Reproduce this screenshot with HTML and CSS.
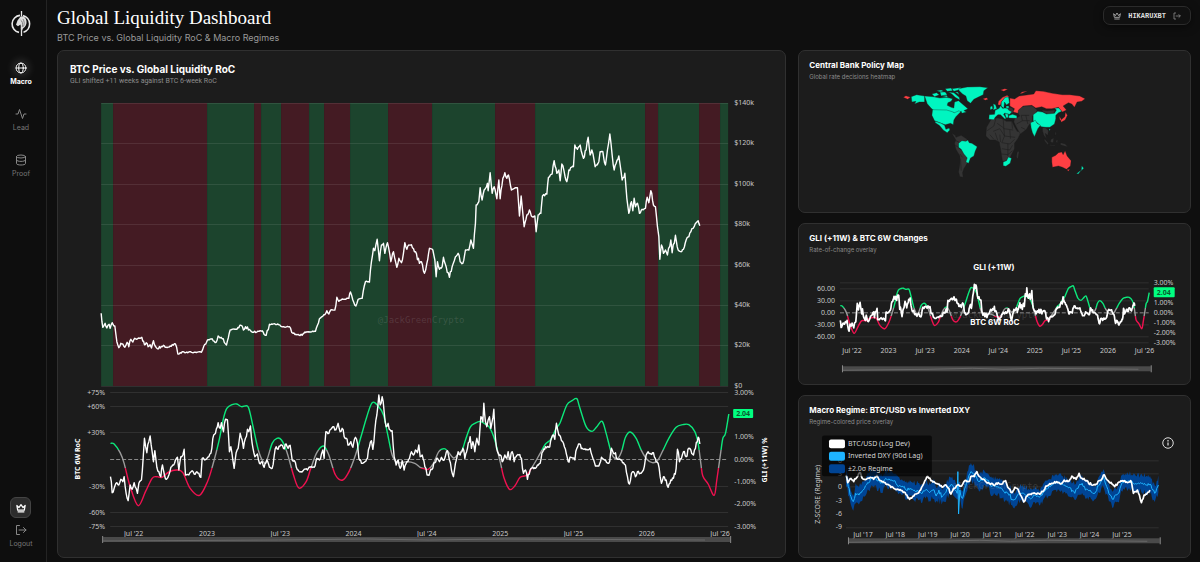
FILE: index.html
```html
<!DOCTYPE html>
<html lang="en">
<head>
    <meta charset="UTF-8">
    <meta name="viewport" content="width=device-width, initial-scale=1">
    <title>Global Liquidity Dashboard</title>
    <link rel="stylesheet" href="styles.css">
</head>
<body>
<div class="app">
    <nav class="sidebar">
        <a class="logo" href="#" aria-label="Home">
            <svg width="20" height="26" viewBox="0 0 20 26" fill="none" stroke="#e8e8e8">
                <path d="M9 4.400A8.600 8.600 0 0 0 8 21.400M12 4.600A8.600 8.600 0 0 1 12.500 21.200" stroke-width="1.600"/>
                <path d="M10.500 0v5M10.500 17v8" stroke-width="1.300"/>
                <path d="M9.500 5.500c3-.8 5.500 1.500 6 4.500.4 3-.8 5.500-3.500 7.500l-1.500 3c-1.200-3-.4-5-1-7l-2.500 1.800-2-1.500 1.500-4.300z" fill="#dedede" stroke="none"/>
                <path d="M9.500 9c2 1 2.500 4 1.800 7M12 8c1.500 2.500 1.500 5 .5 7.500" stroke="#4a4a4a" stroke-width=".6"/>
            </svg>
        </a>
        <a class="nav-item active" href="#">
            <svg class="icon" viewBox="0 0 24 24"><circle cx="12" cy="12" r="10"/><ellipse cx="12" cy="12" rx="4.500" ry="10"/><path d="M2 12h20"/></svg>
            Macro
        </a>
        <a class="nav-item" href="#">
            <svg class="icon" viewBox="0 0 24 24"><path d="M2 12h4l3-9 6 18 3-9h4"/></svg>
            Lead
        </a>
        <a class="nav-item" href="#">
            <svg class="icon" viewBox="0 0 24 24"><ellipse cx="12" cy="5" rx="9" ry="3"/><path d="M3 5v14c0 4 18 4 18 0V5M3 12c0 4 18 4 18 0"/></svg>
            Proof
        </a>
        <div class="sidebar-bottom">
            <button type="button" class="crown-btn" aria-label="Membership">
                <svg width="10" height="10" viewBox="0 0 24 24" fill="none" stroke="#fff" stroke-width="3" stroke-linejoin="round"><path d="M2 6l5 5 5-7 5 7 5-5-2 11H4zM4 21h16"/></svg>
            </button>
            <a class="logout" href="#">
                <svg class="icon" viewBox="0 0 24 24"><path d="M9 3H3v18h6M8 12h14M17 7l5 5-5 5"/></svg>
                Logout
            </a>
        </div>
    </nav>

    <main class="main">
        <header class="header">
            <div>
                <h1>Global Liquidity Dashboard</h1>
                <p>BTC Price vs. Global Liquidity RoC &amp; Macro Regimes</p>
            </div>
            <button type="button" class="user">
                <svg width="8" height="8" viewBox="0 0 24 24" fill="none" stroke="#bbb" stroke-width="2.500" stroke-linejoin="round"><path d="M2 5l5 6 5-8 5 8 5-6-2 11H4zM4 21h16"/></svg>
                <span>HIKARUXBT</span>
                <svg width="8" height="8" viewBox="0 0 24 24" fill="none" stroke="#888" stroke-width="2.500"><path d="M9 3H3v18h6M8 12h14M17 7l5 5-5 5"/></svg>
            </button>
        </header>

        <div class="grid">
            <section class="card card-main">
                <h2>BTC Price vs. Global Liquidity RoC</h2>
                <p>GLI shifted +11 weeks against BTC 6-week RoC</p>
                <svg class="chart" id="mainChart" viewBox="70 87 703 466"></svg>
            </section>

            <section class="card">
                <h2>Central Bank Policy Map</h2>
                <p>Global rate decisions heatmap</p>
                <svg class="chart map" viewBox="-213 27 1113 371">
                    <g class="neutral">
                        <path d="M216 178l10 6 2 6 16-6 18 12-4 8-12-2-10 6 0 14 12 8 8 14 8 12-2 12-10 16-4 12 2 14-10-2-4-14 4-24 0-24-12-20-4-18 4-10z"/>
                        <path d="M334 136l18-4 14 2 14 8 16 0 8 16 8 14 12 2-10 20-10 14 0 16-12 24-16 14-8 0-6-38-4-20-12-6-16 0-12-12 2-26z"/>
                        <path d="M404 134l16-8-8-12 6-10 14-8 26 0 14 12-4 12-10 6 0 16-10 10-8 14-18 14-10-16-10-20z"/>
                        <path d="M384 98l14 4 4 8-4 8-12-4z"/>
                        <path d="M486 108l16 2 24-2-4 10-20 2-12-6z"/>
                        <path d="M488 160l10 2 8 8-2 14-8-6 4 16-8-10-4-14z"/>
                        <path d="M494 194l12 14-2 4-10-12zM514 196l8-4-2 14-8-2zM508 212l18 2v2l-18-2zM528 200l6-2-2 10zM542 206l14 4 8 8-10-2-12-4zM526 172l4 8-4 4zM412 234l6-2-4 22-4-4z"/>
                        <path class="borders" d="M348 134l-6 22-20 14M352 148l20 14 2 24M370 134l2 30 28 4M340 172l20-8 14 22 32 4M330 182l12 14M346 176l8 24M360 182l2 22M374 186l-8 20 24 4 14-14M390 168l2 26M366 224l24 4 8-14M384 210v36M364 240l20 2 14-12M396 142l2 22M410 150l18-10 22 0M424 160l12 6M428 140l-4-16 24 0M438 124l6 26M228 200l12 6M226 214l10 6M240 240l8 10M242 254l2 36"/>
                    </g>
                    <g class="cut">
                        <path d="M94 68l16-6 24 4v18l-16 0-14 6 4-8-12 2z"/>
                        <path d="M134 66l26 2 20 4 20-2 18 4-4 8-10 4-2 8 12 6 8 2 2-18 12-4 14 12 14 12-12 6 8 4-14 4-2-6-14 8-8-4-14-4-42 1-12-10-12-14z"/>
                        <path d="M156 60l14-4 8 6-14 6zM180 54l16 0 6 8-18 4zM170 50l14-2 8 4-10 2zM196 44l18-2 4 8-16 2zM216 44l28-4-8 8-14 4zM206 54l16 2 16 14 2 8-14-8-10-10zM226 54l8 0 4 8zM186 66l14-2 4 6z"/>
                        <path d="M236 44l26-5 38-1 24 3-12 9-2 12-16 8-12 6-10 12-10-8-4-14-10-6-10-10z"/>
                        <path d="M158 107l42 1 14 4 10 4 14-6 4 4-14 14-6 10-2 14-8-4-16 4-12-4-20-8-8-16z"/>
                        <path d="M166 142l18 6 10 6 4 12 10-4 2 6-8 8-12-8-8-10-4-4-12-8z"/>
                        <path d="M236 208l10-8 12 2 6-4 4 8 8 2 16 10-6 14-4 14-10 6-6 16-8-4 4-12-10-12-8-14-8-6z"/>
                        <path d="M370 264l10-4 6-11 9 4-4 15-13 9-8-2z"/>
                        <path d="M340 89l7 3 4 12-11 4 2-8zM331 99l6-4 2 9-8 3zM346 109l12-6 4-8 6 8 14-2 5 8 9 4-6 8-10-2-5-2-4 4 8 12-4 2-13-13-8 0-8 8-4 7-15-1 1-14 16-1zM375 118l10 2 0 11-6 0zM386 125l12-4 13 4 0 8-24-1zM364 96l0-12 12-16 10 0 3 18-9 7-6-9-2 19zM379 96l8 0 0 7-9 0z"/>
                        <path d="M460 122l14-10 14 2 12 6 24-2 6-10-6-6 14 0 8 10-10 4-8 8 0 10-4 16-14 10-12 0-14-2-12-12-12-6zM508 164l4 2-4 4z"/>
                        <path d="M452 146l10-4 4-4 6 10 10 6-8 10-10 24-6-12-4-14z"/>
                        <path d="M606 275l6 8-8 8zM605 287l-9 13-6-1z"/>
                    </g>
                    <g class="hike">
                        <path d="M390 72l14 3 14-9 28-4 16-2 6-10 22 2 28 6 30 4 22 0 30 4 16 8-10 8-14 2-8 16-8-10-10-4-16 10 10 12-12 6-12-14-20 4-16 0-14-6-18 4-12-8-26 2-14 12-2 10-14-4 4-10-14-8z"/>
                        <path d="M354 92l2-10 12-12 14-6 6 4-12 2-12 14-2 10zM70 70l8-5 14 5-9 6zM309 74l11-3 5 5-9 3zM362 48l12-4 10 2-12 6zM420 60l6-6 18-4-16 8zM543 138l12-10 2-14 6 10-7 14-12 7zM538 127l7 9-4 4z"/>
                        <path d="M516 250l12-6 8-8 10-2 4 8 6-12 6 16 12 14-2 16-12 10-12-6-12-4-18 4-2-16zM561 287l9-1-4 6z"/>
                    </g>
                </svg>
            </section>

            <section class="card">
                <h2>GLI (+11W) &amp; BTC 6W Changes</h2>
                <p>Rate-of-change overlay</p>
                <svg class="chart" id="rocChart" viewBox="809 257 371 123"></svg>
            </section>

            <section class="card">
                <h2>Macro Regime: BTC/USD vs Inverted DXY</h2>
                <p>Regime-colored price overlay</p>
                <button type="button" class="info" aria-label="About this chart">
                    <svg width="12" height="12" viewBox="0 0 24 24" fill="none" stroke="#ddd" stroke-width="2"><circle cx="12" cy="12" r="10.500"/><path d="M12 11v6M12 6v3" stroke-width="2.500"/></svg>
                </button>
                <svg class="chart" id="regimeChart" viewBox="809 430 371 123"></svg>
            </section>
        </div>
    </main>
</div>
<script src="charts.js"></script>
</body>
</html>
```

FILE: styles.css
```css
* {
    box-sizing: border-box;
}

body {
    margin: 0;
    background: #0f0f0f;
    color: #fff;
    font-family: Inter, "Open Sans", sans-serif;
}

h1, h2, p {
    margin: 0;
}

a {
    color: inherit;
    text-decoration: none;
}

button {
    padding: 0;
    font: inherit;
    color: inherit;
    cursor: pointer;
}

.app {
    display: flex;
    min-height: 100vh;
}

/* sidebar */
.sidebar {
    display: flex;
    flex-direction: column;
    align-items: center;
    flex: none;
    width: 47px;
    padding: 11px 4px 14px 0;
    border-right: 1px solid #242424;
    background: #0e0e0e;
}

.logo {
    height: 26px;
    margin-bottom: 24px;
}

.nav-item, .logout {
    display: flex;
    flex-direction: column;
    align-items: center;
    gap: 4px;
    color: #777;
    font-size: 7px;
    line-height: 8px;
}

.nav-item {
    height: 46px;
}

.icon {
    width: 12px;
    height: 12px;
    fill: none;
    stroke: #888;
    stroke-width: 2;
    stroke-linecap: round;
    stroke-linejoin: round;
}

.active {
    color: #fff;
    font-weight: 700;
}

.active .icon {
    stroke: #fff;
    border-radius: 50%;
    box-shadow: 0 0 8px 2px rgba(255, 255, 255, .14);
}

.nav-item .icon {
    margin-top: 1px;
}

.sidebar-bottom {
    display: flex;
    flex-direction: column;
    align-items: center;
    gap: 6px;
    margin-top: auto;
}

.crown-btn {
    display: flex;
    align-items: center;
    justify-content: center;
    width: 21px;
    height: 21px;
    border: 1px solid #444;
    border-radius: 6px;
    background: #2c2c2c;
}

/* header */
.main {
    display: flex;
    flex: 1;
    flex-direction: column;
    min-width: 0;
    padding: 6px 9px 4px 10px;
}

.header {
    display: flex;
    align-items: flex-start;
    justify-content: space-between;
    margin-bottom: 4px;
}

h1 {
    font: 400 19px/24px "Liberation Serif", serif;
}

.header p {
    color: #999;
    font-size: 9px;
    line-height: 16px;
}

.user {
    display: flex;
    align-items: center;
    gap: 7px;
    height: 19px;
    padding: 0 9px;
    border: 1px solid #2b2b2b;
    border-radius: 7px;
    background: #111;
    box-shadow: 0 2px 8px rgba(0, 0, 0, .5);
    color: #ddd;
    font: 700 7px/8px "Liberation Mono", monospace;
}

/* cards */
.grid {
    display: grid;
    flex: 1;
    grid-template-columns: 13fr 7fr;
    grid-template-rows: repeat(3, 1fr);
    gap: 10px 12px;
}

.card {
    position: relative;
    display: flex;
    flex-direction: column;
    min-width: 0;
    padding: 8px 10px 4px;
    border: 1px solid #303030;
    border-radius: 7px;
    background: #1c1c1c;
}

.card-main {
    grid-row: 1 / 4;
    padding: 12px 12px 4px;
}

.card h2 {
    font-size: 8px;
    line-height: 12px;
}

.card p {
    color: #8c8c8c;
    font-size: 6px;
    line-height: 11px;
}

.card-main h2 {
    font-size: 10px;
}

.card-main p {
    font: 7px/12px Roboto, sans-serif;
}

.info {
    position: absolute;
    top: 41px;
    right: 16px;
    width: 12px;
    height: 12px;
    border: 0;
    background: none;
}

.info svg {
    display: block;
}

/* charts */
.chart {
    display: block;
    flex: 1 1 0;
    width: 100%;
    min-height: 110px;
    font-family: "Noto Sans", "Open Sans", sans-serif;
    font-size: 7px;
}

.tick {
    fill: #c8c8c8;
}

.axis-name {
    fill: #fff;
    font-weight: 700;
}

.chart-name {
    fill: #fff;
    font: 700 8px Inter, sans-serif;
}

.gridline {
    stroke: rgba(255, 255, 255, .09);
}

.zero {
    stroke: #8a8a8a;
    stroke-dasharray: 4 2;
}

.bull {
    fill: #1c442d;
}

.bear {
    fill: #441b23;
}

.watermark {
    fill: rgba(160, 160, 160, .22);
    font: 9px "DejaVu Sans Mono", monospace;
}

.line {
    fill: none;
    stroke: #fff;
    stroke-width: 1.4;
    stroke-linejoin: round;
}

.bold {
    stroke-width: 1.7;
}

.dxy {
    stroke: #1eb4ff;
    stroke-width: 1;
}

.regime {
    fill: #004494;
}

.track {
    fill: #4a4a4a;
}

.trend {
    fill: none;
    stroke: #686868;
}

.handle {
    fill: #8b8b8b;
}

.badge {
    fill: #00ff80;
}

.badge-text {
    fill: #0b5a30;
    font-weight: 700;
}

.legend-box {
    fill: rgba(0, 0, 0, .62);
}

.legend-text {
    fill: #d4d4d4;
}

/* map */
.map path {
    stroke: #1c1c1c;
    stroke-width: 1;
    stroke-linejoin: round;
}

.neutral {
    fill: #343434;
}

.map .borders {
    fill: none;
    stroke: #1f1f1f;
    stroke-width: 2;
}

.cut {
    fill: #00f5c0;
}

.hike {
    fill: #ff3f43;
}
```

FILE: charts.js
```js
var NS = 'http://www.w3.org/2000/svg';

// series are flat x,y lists, three units to one chart unit
var price = [33,670,38,712,45,700,50,714,57,703,60,715,66,698,74,708,80,755,86,773,92,760,98,762,104,772,111,757,116,770,122,748,128,756,134,745,140,748,155,742,163,764,168,758,174,770,180,764,184,774,190,752,195,768,202,776,220,766,228,772,240,768,256,762,263,792,270,788,290,786,310,788,334,787,341,768,352,750,366,746,378,757,384,738,396,746,409,765,420,720,440,718,452,706,460,720,466,710,484,725,500,726,510,722,528,736,538,703,563,702,580,710,598,710,608,730,636,736,650,725,676,724,688,686,704,674,710,662,716,672,722,660,734,660,740,622,746,634,756,627,764,628,776,625,781,606,788,630,797,648,804,628,816,625,826,575,838,576,844,515,850,475,854,482,861,448,868,512,874,465,880,460,884,490,892,458,902,515,910,485,920,532,926,505,934,518,940,490,944,458,950,478,956,465,964,464,976,485,988,520,994,515,1003,550,1010,520,1018,475];
var price2 = [92,476,98,480,104,510,108,560,112,515,118,538,126,530,130,502,138,530,148,562,156,530,166,500,174,490,180,515,188,520,196,480,206,480,212,450,220,475,226,400,228,345,236,335,240,293,246,330,252,300,262,280,264,302,270,248,276,310,282,290,290,326,296,270,300,326,308,265,314,248,320,265,325,255,334,300,352,293,358,378,363,318,372,410,380,375,388,360,396,380,404,378,408,425,414,375,422,370,427,318,440,312,445,262,456,252,462,212,470,250,476,240,480,272,485,222,492,245,500,275,506,240,520,230,524,165,532,178,540,165,550,205,558,180,564,142,570,195,575,180,585,230,596,215,600,185,608,185,616,225,622,180,629,132,636,195,642,240,648,220,656,198,660,225,666,270,674,250,680,325,686,370,694,335,698,362,702,325,706,350,712,340,718,370,726,358,736,355,741,322,746,338,752,302,760,345,766,350,772,410,776,440,779,508,784,465,790,490,796,480,802,495,812,450,816,488,826,436,834,480,842,485,850,478,858,450,866,440,872,425,882,410,894,392,899,407];

var roc = [151,290,156,338,162,325,170,308,176,315,182,298,188,305,192,290,198,340,204,362,210,315,216,328,222,308,228,325,232,340,236,310,244,300,249,235,253,175,260,218,266,185,270,168,276,215,280,245,284,212,290,262,296,275,302,290,307,255,313,285,319,298,326,285,332,262,338,255,346,240,352,232,356,270,362,230,368,225,372,208,376,285,386,285,396,272,402,282,410,275,416,280,422,292,426,235,434,240,446,230,452,220,458,175,466,160,474,128,480,145,484,128,490,155,496,118,502,120,508,215,512,200,518,240,522,265,528,218,534,205,540,160,546,180,550,205,556,175,562,148,566,155,571,138,576,190,584,230,592,222,598,250,606,245,612,262,620,240,628,262,636,265,642,228,648,200,654,208,662,195,670,205,678,192,684,205,690,196,696,240,706,248,714,270,722,275,732,268,742,270,750,262,762,262,770,235,778,240,784,222,788,210,792,235,797,155,806,160,812,148,818,140,824,150,830,142,834,130,840,155,846,145,852,170,858,175,866,195,872,185,878,202,886,172,892,190,896,235,904,250,914,245,922,235,928,200,934,182,938,208,944,150,950,105,956,45,960,75,966,50,972,95,978,140,984,130,990,150,996,152,1002,230,1008,255,1014,240,1020,265,1026,242,1032,270,1040,245,1048,235,1054,215,1060,225,1066,210,1072,218,1076,195];
var roc2 = [0,230,6,225,14,260,24,285,32,268,44,248,52,235,58,245,64,232,72,240,82,212,88,240,94,270,100,290,106,250,114,215,120,225,128,205,134,235,142,205,150,170,154,205,158,185,164,215,170,175,176,195,182,110,188,125,191,70,196,125,200,140,204,120,208,110,212,145,216,125,221,88,226,175,232,215,240,225,246,245,254,225,260,235,264,215,270,240,276,215,282,245,288,230,296,225,304,235,310,280,316,270,322,298,330,270,338,262,346,265,352,255,360,250,368,215,376,200,386,202,394,175,400,165,404,178,409,130,416,165,424,182,430,190,436,208,444,245,452,232,464,240,470,205,478,192,486,205,500,208,510,205,518,235,526,258,536,258,544,232,556,240,566,250,574,205,580,220,586,218,592,238,602,240,610,248,616,255,622,290,628,312,634,280,640,275,646,290,652,275,660,280,670,270,678,225,684,215,692,222,700,218,708,245,714,250,720,290,724,310,730,290,738,300,744,322,752,300,760,295,768,265,772,208,778,245,784,235,790,215,798,230,806,205,812,210,820,225,826,205,834,172,839,192];

var gli = [151,190,162,192,180,218,192,250,210,320,234,377,256,335,276,295,290,290,306,292,326,276,350,270,368,278,390,325,418,346,442,305,458,255,476,185,490,115,500,85,516,74,530,72,544,80,562,78,570,100,582,155,596,215,612,248,622,235,636,190,650,175,664,180,680,215,700,285,716,324,738,305,752,265,770,218,790,198,806,225,826,285,848,300,868,272,886,225,904,165,920,110,936,68,954,78,970,105,982,160,996,225,1012,248,1040,245,1064,250];
var gli2 = [0,262,12,266,24,268,40,250,56,215,72,206,84,215,100,234,112,225,126,210,136,180,150,142,164,130,180,124,194,132,208,142,224,180,240,245,252,295,268,328,284,318,300,292,320,285,340,255,360,220,376,192,392,178,408,145,420,128,440,75,456,62,470,56,478,80,498,140,516,154,530,140,546,124,558,160,576,225,592,235,604,215,616,172,630,156,648,175,664,212,680,238,696,248,712,242,728,212,746,175,768,142,788,134,806,134,824,155,834,190,842,250,848,288,864,312,882,346,890,300,902,215,908,175,916,160,926,102];

var dxy = [153,250,160,280,168,310,175,325,182,300,192,305,205,290,218,268,230,255,240,250,250,262,260,268,272,255,285,260,300,262,310,280,322,278,334,290,345,285,358,290,370,295,382,300,392,290,404,298,414,290,424,308,432,290,440,312,450,300,460,285,472,275,480,290,487,300,489,235,491,362,495,290,503,315,512,280,520,255,528,235,540,250,552,265,565,255,580,260,592,278,604,280,615,285,628,295,640,300,655,320,668,305,680,300,695,305,710,315,722,305,736,310,748,295,760,285,772,275,786,268,798,270,810,275,825,282,840,300,850,285,862,270,872,290,886,290,900,300,914,275,926,250,936,280,946,305,956,318,966,305,976,285,986,268,1000,262,1014,268,1026,272,1040,270,1055,275,1066,272,1074,290,1080,300,1086,285,1091,275];
var dev = [153,245,158,268,168,255,176,265,186,252,194,238,202,255,214,258,226,252,236,258,246,246,256,262,268,268,282,275,296,285,310,288,322,292,336,305,344,318,354,308,368,300,380,282,390,262,398,248,408,262,420,268,432,272,442,282,454,275,462,285,468,302,476,285,488,275,500,278,510,262,522,265,530,248,538,250,546,235,554,250,566,258,580,268,596,275,610,268,620,272,632,262,642,285,652,298,660,282,670,288,680,310,687,326,694,310,706,302,720,300,734,302,744,295,756,278,770,270,786,265,798,272,808,260,820,265,834,250,844,258,853,240,862,255,876,262,890,275,904,272,916,262,926,245,940,262,952,272,960,280,970,268,984,262,998,268,1008,262,1016,300,1028,290,1034,305,1040,328,1048,305,1056,302,1066,290];

var seed = 7;
function rand() {
    seed = (seed * 16807) % 2147483647;
    return seed / 2147483647 - 0.5;
}

function toPoints(list, ox, oy) {
    var out = [];
    for (var i = 0; i < list.length; i += 2) {
        out.push([list[i] / 3 + ox, list[i + 1] / 3 + oy]);
    }
    return out;
}

function noisy(pts, amp) {
    var out = [];
    for (var i = 0; i < pts.length - 1; i++) {
        var a = pts[i], b = pts[i + 1];
        var n = Math.max(1, Math.round(b[0] - a[0]));
        var k = amp * Math.min(1.5, .4 + Math.abs(b[1] - a[1]) / 8);
        for (var j = 0; j < n; j++) {
            var t = j / n;
            out.push([a[0] + (b[0] - a[0]) * t, a[1] + (b[1] - a[1]) * t + (j ? rand() * k : 0)]);
        }
    }
    out.push(pts[pts.length - 1]);
    return out;
}

function straight(pts) {
    return 'M' + pts.map(function (p) {
        return p[0].toFixed(1) + ' ' + p[1].toFixed(1);
    }).join('L');
}

function smooth(pts) {
    var d = 'M' + pts[0].join(' ');
    for (var i = 0; i < pts.length - 1; i++) {
        var p0 = pts[i - 1] || pts[i], p1 = pts[i], p2 = pts[i + 1], p3 = pts[i + 2] || p2;
        d += 'C' + [p1[0] + (p2[0] - p0[0]) / 6, p1[1] + (p2[1] - p0[1]) / 6,
            p2[0] - (p3[0] - p1[0]) / 6, p2[1] - (p3[1] - p1[1]) / 6, p2[0], p2[1]].join(' ');
    }
    return d;
}

function add(parent, tag, attrs, text) {
    var el = document.createElementNS(NS, tag);
    for (var k in attrs) {
        el.setAttribute(k, attrs[k]);
    }
    if (text) {
        el.textContent = text;
    }
    parent.appendChild(el);
    return el;
}

function label(svg, x, y, text, anchor, cls) {
    // y is the middle of the text
    add(svg, 'text', {x: x, y: y + 2.5, 'text-anchor': anchor || 'middle', 'class': cls || 'tick'}, text);
}

function hline(svg, x1, x2, y, cls) {
    add(svg, 'line', {x1: x1, x2: x2, y1: y, y2: y, 'class': cls || 'gridline'});
}

function rect(svg, x, y, w, h, cls, r) {
    add(svg, 'rect', {x: x, y: y, width: w, height: h, rx: r || 0, 'class': cls});
}

function slider(svg, x, y, w) {
    rect(svg, x, y, w, 5, 'track');
    add(svg, 'path', {
        d: 'M' + x + ' ' + (y + 4) + 'l' + w * .28 + ' -1l' + w * .14 + ' -1l' + w * .1 + ' 1l' + w * .12 + ' -1l' + w * .32 + ' 1',
        'class': 'trend'
    });
    rect(svg, x - 1, y - 1, 1, 7, 'handle');
    rect(svg, x + w, y - 1, 1, 7, 'handle');
}

// green above the upper limit, grey around zero, red below
function gradient(svg, id, top, bottom, up, down) {
    var g = add(svg, 'linearGradient', {id: id, gradientUnits: 'userSpaceOnUse', x1: 0, x2: 0, y1: top, y2: bottom});
    var a = (up - top) / (bottom - top), b = (down - top) / (bottom - top);
    [[0, '#0be87b'], [a, '#0be87b'], [a, '#9b9b9b'], [b, '#9b9b9b'], [b, '#f0104f'], [1, '#f0104f']].forEach(function (s) {
        add(g, 'stop', {offset: s[0], 'stop-color': s[1]});
    });
}

var months = ["Jul '22", '2023', "Jul '23", '2024', "Jul '24", '2025', "Jul '25", '2026', "Jul '26"];
var rocPts = noisy(toPoints(roc, 60, 380).concat(toPoints(roc2, 420, 380)), 4);
var gliPts = toPoints(gli, 60, 380).concat(toPoints(gli2, 420, 380));

function drawMain() {
    var svg = document.getElementById('mainChart');
    var edges = [101, 113, 207, 254, 261, 281, 309, 324, 350, 388, 432, 495, 535, 645, 658, 699, 720, 728];
    for (var i = 0; i < edges.length - 1; i++) {
        rect(svg, edges[i], 103, edges[i + 1] - edges[i], 283, i % 2 ? 'bear' : 'bull');
    }
    for (i = 0; i < 8; i++) {
        var y = Math.round(103 + i * 40.4) + .5;
        hline(svg, 101, 728, y);
        label(svg, 734, y - 1, '$' + (140 - i * 20) + (i < 7 ? 'k' : ''), 'start');
    }
    label(svg, 421, 320, '@JackGreenCrypto', 'middle', 'watermark');
    var pts = toPoints(price, 90, 90).concat(toPoints(price2, 400, 90));
    add(svg, 'path', {d: straight(noisy(pts, 3)), 'class': 'line'});

    [['+75%', 392], ['+60%', 406], ['+30%', 432], ['-30%', 486], ['-60%', 512], ['-75%', 526]].forEach(function (t) {
        hline(svg, 110, 728, t[1] + .5);
        label(svg, 105, t[1], t[0], 'end');
    });
    hline(svg, 110, 728, 459.5, 'zero');
    [['3.00%', 392], ['1.00%', 436], ['0.00%', 459], ['-1.00%', 481], ['-2.00%', 503], ['-3.00%', 526]].forEach(function (t) {
        label(svg, 734, t[1], t[0], 'start');
    });
    gradient(svg, 'gliMain', 390, 530, 449.5, 468);
    add(svg, 'path', {d: smooth(gliPts), 'class': 'line', style: 'stroke:url(#gliMain)'});
    add(svg, 'path', {d: straight(rocPts), 'class': 'line'});
    rect(svg, 733, 409, 20, 9, 'badge', 1);
    label(svg, 743, 413, '2.04', 'middle', 'badge-text');
    add(svg, 'text', {transform: 'translate(80 459) rotate(-90)', 'text-anchor': 'middle', 'class': 'axis-name'}, 'BTC 6W RoC');
    add(svg, 'text', {transform: 'translate(767 460) rotate(-90)', 'text-anchor': 'middle', 'class': 'axis-name'}, 'GLI (+11W) %');
    months.forEach(function (m, i) {
        label(svg, 133.5 + i * 73.3, 533, m);
    });
    slider(svg, 103, 537, 627);
}

function drawRoc() {
    var svg = document.getElementById('rocChart');
    function place(p) {
        return [840.3 + (p[0] - 110.3) * .5, 313.4 + (p[1] - 459.3) * .444];
    }
    [283, 289, 301, 325, 337, 343].forEach(function (y) {
        hline(svg, 840, 1149, y + .5);
    });
    hline(svg, 840, 1149, 313.5, 'zero');
    [['60.00', 289], ['30.00', 301], ['0.00', 313], ['-30.00', 325], ['-60.00', 337]].forEach(function (t) {
        label(svg, 835, t[1], t[0], 'end');
    });
    [['3.00%', 283], ['1.00%', 303], ['0.00%', 313], ['-1.00%', 323], ['-2.00%', 333], ['-3.00%', 343]].forEach(function (t) {
        label(svg, 1154, t[1], t[0], 'start');
    });
    label(svg, 995, 316, '@JackGreenCrypto', 'middle', 'watermark');
    gradient(svg, 'gliSmall', 280, 346, 309, 317);
    add(svg, 'path', {d: smooth(gliPts.map(place)), 'class': 'line', style: 'stroke:url(#gliSmall)'});
    add(svg, 'path', {d: straight(rocPts.map(place)), 'class': 'line bold'});
    label(svg, 994, 268, 'GLI (+11W)', 'middle', 'chart-name');
    label(svg, 995, 323, 'BTC 6W RoC', 'middle', 'chart-name');
    rect(svg, 1154, 288, 21, 10, 'badge', 1);
    label(svg, 1164, 293, '2.04', 'middle', 'badge-text');
    months.forEach(function (m, i) {
        label(svg, 852 + i * 36.6, 351, m);
    });
    slider(svg, 843, 367, 308);
}

function drawRegime() {
    var svg = document.getElementById('regimeChart');
    [462, 475, 488, 529].forEach(function (y) {
        hline(svg, 846, 1159, y + .5);
    });
    ['6', '3', '0', '-3', '-6', '-9'].forEach(function (t, i) {
        label(svg, 842, 462 + i * 13.3, t, 'end');
    });
    var pts = noisy(toPoints(dxy, 795, 395), 4);
    // the spike stays out of the band
    var base = pts.filter(function (p) {
        return p[0] < 957.5 || p[0] > 959.5;
    });
    var top = base.map(function (p) {
        return [p[0], p[1] - 8 + rand() * 5];
    });
    var bottom = base.map(function (p) {
        return [p[0], p[1] + 8 + rand() * 5];
    }).reverse();
    add(svg, 'path', {d: straight(top.concat(bottom)) + 'Z', 'class': 'regime'});
    label(svg, 995, 488, '@JackGreenCrypto', 'middle', 'watermark');
    add(svg, 'path', {d: straight(pts), 'class': 'line dxy'});
    add(svg, 'path', {d: straight(noisy(toPoints(dev, 795, 395), 3)), 'class': 'line bold'});
    add(svg, 'text', {transform: 'translate(820 496) rotate(-90)', 'text-anchor': 'middle', 'class': 'tick'}, 'Z-SCORE (Regime)');
    for (var i = 0; i < 9; i++) {
        label(svg, 863 + i * 32.4, 536, "Jul '" + (17 + i));
    }
    slider(svg, 849, 540, 311);

    rect(svg, 822, 437, 110, 41, 'legend-box', 2);
    [['BTC/USD (Log Dev)', '#fff'], ['Inverted DXY (90d Lag)', '#1eb4ff'], ['±2.0σ Regime', '#004494']].forEach(function (t, i) {
        add(svg, 'rect', {x: 829, y: 441 + i * 12.5, width: 16, height: 9, rx: 2, fill: t[1]});
        label(svg, 848, 445 + i * 12.5, t[0], 'start', 'legend-text');
    });
}

drawMain();
drawRoc();
drawRegime();
```
